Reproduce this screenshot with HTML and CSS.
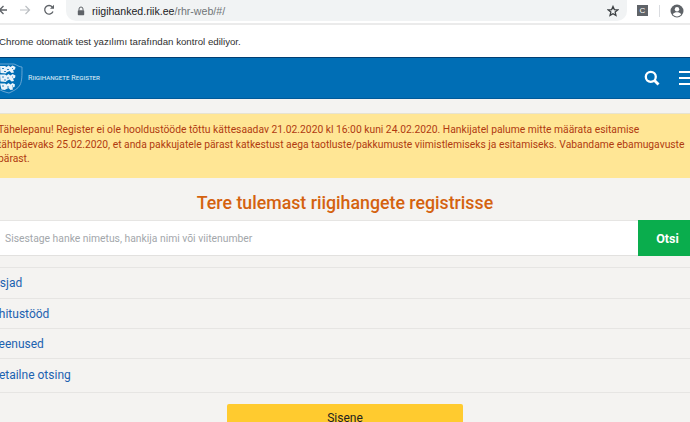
FILE: index.html
```html
<!DOCTYPE html>
<html lang="et">
<head>
<meta charset="utf-8">
<title>Riigihangete Register</title>
<link rel="stylesheet" href="styles.css">
</head>
<body>
<div class="toolbar">
  <svg class="tb-back" width="10" height="12" viewBox="0 0 10 12"><path d="M9 6H1.500M5.500 2L1.500 6l4 4" fill="none" stroke="#5f6368" stroke-width="1.300"/></svg>
  <svg class="tb-forward" width="12" height="12" viewBox="0 0 12 12"><path d="M1 6h9.500M6.500 2l4 4-4 4" fill="none" stroke="#bcbfc3" stroke-width="1.200"/></svg>
  <svg class="tb-reload" width="12" height="12" viewBox="0 0 12 12"><path d="M10 7.500A4.300 4.300 0 1 1 9.300 3" fill="none" stroke="#5f6368" stroke-width="1.300"/><path d="M11 0.800V4.800H7z" fill="#5f6368"/></svg>
  <div class="omnibox">
    <svg class="lock" width="8" height="10" viewBox="0 0 8 10"><path d="M2 4.500V3a2 2 0 0 1 4 0v1.500" fill="none" stroke="#5f6368" stroke-width="1"/><rect x=".8" y="4.200" width="6.400" height="5" rx=".7" fill="#5f6368"/></svg>
    <span class="url"><span class="url-host">riigihanked.riik.ee</span>/rhr-web/#/</span>
    <svg class="star" width="12" height="12" viewBox="0 0 24 24"><path d="M12 3l2.700 6.200 6.800.6-5.200 4.400 1.600 6.600L12 17.300l-5.900 3.500 1.600-6.600L2.500 9.800l6.800-.6z" fill="none" stroke="#3c4043" stroke-width="2.600"/></svg>
  </div>
  <span class="ext">C</span>
  <span class="tb-sep"></span>
  <svg class="avatar" width="14" height="14" viewBox="0 0 14 14"><circle cx="7" cy="7" r="6.500" fill="#5f6368"/><circle cx="7" cy="5.200" r="2.200" fill="#fff"/><path d="M2.800 10.300c1-1.500 2.600-2 4.200-2s3.200.5 4.200 2c-1 1.300-2.500 2.100-4.200 2.100s-3.200-.8-4.200-2.100z" fill="#fff"/></svg>
</div>
<div class="infobar"><span class="infobar-text">Chrome otomatik test yazılımı tarafından kontrol ediliyor.</span></div>
<header class="site-header">
  <svg class="crest" width="23" height="31" viewBox="0 0 23 31">
    <path d="M-3 1h17c3 1 5 3 8 3 0 9 0 14-2 18-2 4-7 6-11 8-4-1-8-2-12-5z" fill="none" stroke="#7fb2da" stroke-width=".8"/>
    <g fill="#eaf3fa">
      <path d="M0 3h5l1.500 1 2-1.500 2 1.500 2-1.500 3 1.500-.5 2.500-2 .5 1 2.500-2.500.5-2-2-3 1.500-.5 1-5.500-.5z"/>
      <path d="M0 11.500h5l1.500 1 2-1.500 2 1.500 2-1.500 3 1.500-.5 2.500-2 .5 1 2.500-2.500.5-2-2-3 1.500-.5 1-5.500-.5z"/>
      <path d="M0 20.500h5l1.500 1 2-1.500 2 1.500 2-1.500 2.500 1.500-.5 2.500-2 .5.500 2-2.500.5-2-2-3 1.500-.5.5-3.500-.5z"/>
    </g>
    <g fill="#2f86c4">
      <rect x="2" y="5" width="2" height="1"/><rect x="7" y="6" width="2" height="1"/><rect x="12" y="5" width="1" height="1"/><rect x="4" y="8" width="2" height="1"/>
      <rect x="2" y="13.500" width="2" height="1"/><rect x="7" y="14.500" width="2" height="1"/><rect x="12" y="13.500" width="1" height="1"/><rect x="4" y="16.500" width="2" height="1"/>
      <rect x="2" y="22.500" width="2" height="1"/><rect x="7" y="23.500" width="2" height="1"/><rect x="12" y="22.500" width="1" height="1"/>
    </g>
  </svg>
  <span class="brand">Riigihangete Register</span>
  <svg class="search-icon" width="16" height="16" viewBox="0 0 16 16"><circle cx="6.800" cy="6.800" r="5" fill="none" stroke="#fff" stroke-width="2.300"/><path d="M10.500 10.500l4 4" stroke="#fff" stroke-width="2.800"/></svg>
  <span class="burger"><i></i><i></i><i></i></span>
</header>
<main>
  <div class="notice">Tähelepanu! Register ei ole hooldustööde tõttu kättesaadav 21.02.2020 kl 16:00 kuni 24.02.2020. Hankijatel palume mitte määrata esitamise<br>tähtpäevaks 25.02.2020, et anda pakkujatele pärast katkestust aega taotluste/pakkumuste viimistlemiseks ja esitamiseks. Vabandame ebamugavuste<br>pärast.</div>
  <h1 class="title">Tere tulemast riigihangete registrisse</h1>
  <div class="search">
    <span class="search-input">Sisestage hanke nimetus, hankija nimi või viitenumber</span>
    <button class="search-btn">Otsi</button>
  </div>
  <nav class="menu">
    <a class="menu-item item-asjad">Asjad</a>
    <a class="menu-item item-ehitus">Ehitustööd</a>
    <a class="menu-item item-teenused">Teenused</a>
    <a class="menu-item item-detail">Detailne otsing</a>
  </nav>
  <div class="login"><button class="login-btn">Sisene</button></div>
</main>
</body>
</html>
```
FILE: styles.css
```css
* { box-sizing: border-box; }
html, body { margin: 0; height: 422px; overflow: hidden; }
body { width: 690px; background: #f4f3f1; font-family: Roboto, "Liberation Sans", sans-serif; }

.toolbar { height: 25px; background: #fff; border-bottom: 2px solid #ebebeb; display: flex; align-items: flex-start; }
.toolbar > svg { flex: none; margin-top: 4px; }
.tb-back { margin-left: -2px; }
.tb-forward { margin-left: 11px; }
.tb-reload { margin-left: 12px; }
.omnibox { margin-left: 11px; width: 561px; height: 21px; border-radius: 0 0 10px 10px; background: #f1f3f4; display: flex; align-items: center; padding: 0 8px 0 11px; }
.lock { flex: none; }
.url { margin-left: 7px; font: 10.600px/20px "Liberation Sans", sans-serif; color: #6f7377; flex: 1; }
.url-host { color: #202124; }
.star { flex: none; }
.ext { flex: none; margin: 5px 0 0 10px; width: 11px; height: 11px; background: #5f6368; color: #fff; font: 8px/11px "Liberation Sans", sans-serif; text-align: center; }
.tb-sep { flex: none; width: 1px; height: 12px; margin: 5px 0 0 11px; background: #dadce0; }
.toolbar > .avatar { margin-left: 10px; }

.infobar { height: 32px; padding-top: 1px; background: #fff; display: flex; align-items: center; }
.infobar-text { margin-left: -1px; font: 9.700px/14px "Liberation Sans", sans-serif; color: #2f2f2f; }

.site-header { height: 42px; background: #006eb5; border-top: 1px solid #003f74; border-bottom: 1px solid #005a99; display: flex; align-items: center; overflow: hidden; }
.crest { flex: none; }
.brand { margin-left: 5px; font: 7.200px/10px Roboto, sans-serif; font-variant: small-caps; color: #dcebf6; flex: 1; }
.search-icon { flex: none; margin-right: 19px; }
.burger { flex: none; width: 11px; display: flex; flex-direction: column; gap: 4px; }
.burger i { display: block; height: 2px; background: #fff; }

main { padding-top: 14px; }
.notice { height: 65px; border-top: 1px solid #e7e3d0; background: #ffe695; color: #b03a10; font-size: 10.300px; line-height: 14.700px; padding: 9px 0 0; margin-left: -2px; white-space: nowrap; }
.title { margin: 13px 0 0; height: 24px; text-align: center; font-weight: 500; font-size: 17.750px; line-height: 24px; color: #d4620f; }
.search { margin-top: 5px; height: 36px; display: flex; background: #fff; border-top: 1px solid #e6e5e3; border-bottom: 1px solid #e2e1df; }
.search-input { flex: 1; padding-left: 5px; font-size: 10.330px; line-height: 36px; color: #a3a7ab; }
.search-btn { width: 52px; margin: -1px 0; border: 0; background: #0aad4d; color: #fff; font: 700 12.500px Roboto, sans-serif; padding: 0 0 0 7px; }
.menu { margin-top: 11px; border-top: 1px solid #e6e5e3; display: flex; flex-direction: column; }
.menu-item { display: block; height: 30px; border-bottom: 1px solid #e6e5e3; color: #1c62b0; font-size: 12px; line-height: 30px; }
.item-asjad { height: 31px; text-indent: -8px; }
.item-ehitus { text-indent: -8px; }
.item-teenused { text-indent: -8px; }
.item-detail { height: 34px; line-height: 32px; text-indent: -9px; }
.login { margin-top: 11px; display: flex; justify-content: center; }
.login-btn { width: 236px; height: 40px; border: 0; border-radius: 2px; background: #ffcb2f; color: #222; font: 400 12px Roboto, sans-serif; padding: 0 0 12px; }
```
